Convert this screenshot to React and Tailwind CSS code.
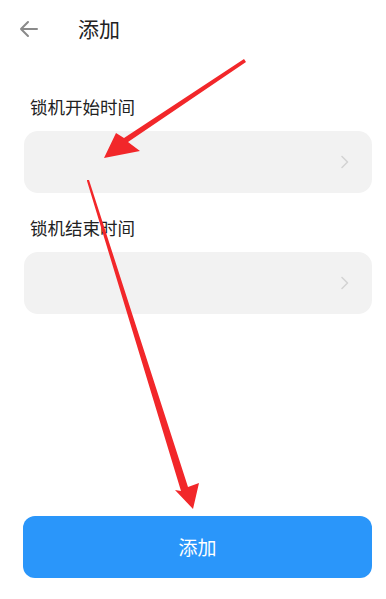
import React from "react";

const ChevronRight = () => (
  <svg width="10" height="14" viewBox="0 0 10 14" fill="none">
    <path d="M2 1.5L7.5 7L2 12.5" stroke="#d4d4d4" strokeWidth="1.6" strokeLinecap="round" strokeLinejoin="round" />
  </svg>
);

const BackArrow = () => (
  <svg width="20" height="18" viewBox="0 0 20 18" fill="none">
    <path d="M18 9H2M9 2L2 9l7 7" stroke="#8a8a8a" strokeWidth="2" strokeLinecap="round" strokeLinejoin="round" />
  </svg>
);

// red annotation arrows painted over the screenshot
const Annotations = () => (
  <svg className="absolute inset-0 pointer-events-none" width="386" height="599" viewBox="0 0 386 599">
    <path d="M244 59 L246 62 L128 142 L140 151 L104 158 L116 133 L124 138 Z" fill="#f2272a" />
    <path d="M87 180 L89 180 L188 487 L199 483 L193 509 L175 490 L181 491 L87 181 Z" fill="#f2272a" />
  </svg>
);

const TimeField = ({ label }) => (
  <div className="flex flex-col">
    <div className="pl-[6px] text-[17.5px] leading-[24px] text-[#222222]">{label}</div>
    <div className="mt-[12px] h-[62px] rounded-[14px] bg-[#f2f2f2] flex items-center justify-end pr-[22px]">
      <ChevronRight />
    </div>
  </div>
);

const App = () => {
  return (
    <div
      className="relative w-[386px] h-[599px] bg-white overflow-hidden"
      style={{ fontFamily: '"Noto Sans CJK SC", "Noto Sans", sans-serif' }}
    >
      <div className="h-[58px] flex items-center pl-[19px]">
        <BackArrow />
        <span className="ml-[39px] text-[21px] text-[#222222]">添加</span>
      </div>

      <div className="pl-[24px] pr-[14px] pt-[37px] flex flex-col gap-[23px]">
        <TimeField label="锁机开始时间" />
        <TimeField label="锁机结束时间" />
      </div>

      <div className="absolute left-0 right-0 top-[516px] pl-[23px] pr-[14px]">
        <button className="w-full h-[62px] rounded-[12px] bg-[#2a96fa] text-white text-[19px]">
          添加
        </button>
      </div>

      <Annotations />
    </div>
  );
};

export default App;
